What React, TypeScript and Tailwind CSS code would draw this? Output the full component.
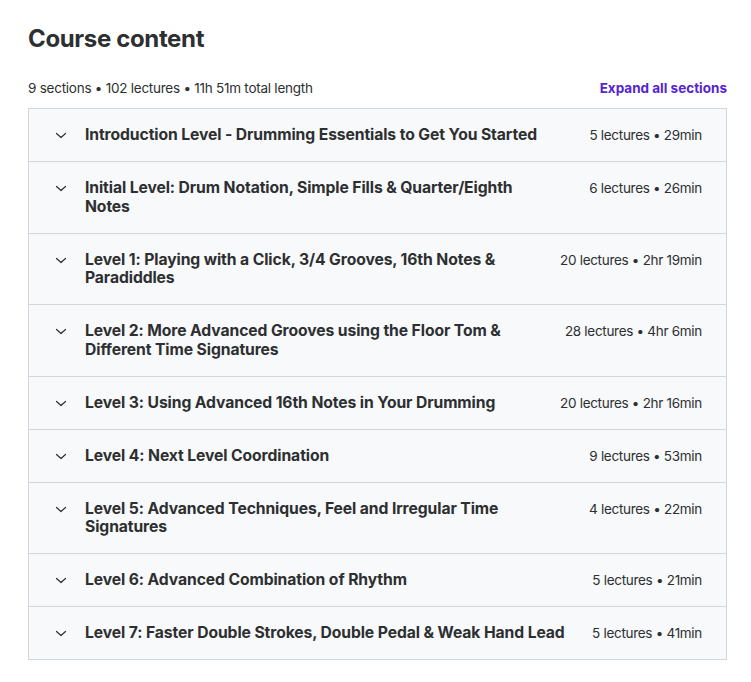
import React from 'react';

type Section = {
    title: string;
    meta: string;
};

// titles wrap where the page wraps them
const sections: Section[] = [
    { title: 'Introduction Level - Drumming Essentials to Get You Started', meta: '5 lectures • 29min' },
    { title: 'Initial Level: Drum Notation, Simple Fills & Quarter/Eighth\nNotes', meta: '6 lectures • 26min' },
    { title: 'Level 1: Playing with a Click, 3/4 Grooves, 16th Notes & Paradiddles', meta: '20 lectures • 2hr 19min' },
    { title: 'Level 2: More Advanced Grooves using the Floor Tom & Different Time Signatures', meta: '28 lectures • 4hr 6min' },
    { title: 'Level 3: Using Advanced 16th Notes in Your Drumming', meta: '20 lectures • 2hr 16min' },
    { title: 'Level 4: Next Level Coordination', meta: '9 lectures • 53min' },
    { title: 'Level 5: Advanced Techniques, Feel and Irregular Time Signatures', meta: '4 lectures • 22min' },
    { title: 'Level 6: Advanced Combination of Rhythm', meta: '5 lectures • 21min' },
    { title: 'Level 7: Faster Double Strokes, Double Pedal & Weak Hand Lead', meta: '5 lectures • 41min' },
];

const Chevron = () => (
    <svg width="16" height="16" viewBox="0 0 16 16" fill="none" className="shrink-0 mt-[1px]">
        <path d="M3.5 6.5l4.5 4 4.5-4" stroke="#2d2f31" strokeWidth="1.2" strokeLinecap="round" strokeLinejoin="round" />
    </svg>
);

const App = () => {
    return (
        <div className="w-[751px] h-[682px] bg-white text-[#2d2f31] font-['Inter',sans-serif] pl-7 pr-6 pt-[24px]">
            <h2 className="text-[24px] leading-[30px] font-bold tracking-[-0.35px]">Course content</h2>

            <div className="flex items-end justify-between mt-[24px] mb-[10px]">
                <div className="text-[13.5px] leading-[20px] tracking-[-0.25px]">9 sections • 102 lectures • 11h 51m total length</div>
                <button className="text-[13.5px] leading-[20px] font-bold text-[#5624d0]">Expand all sections</button>
            </div>

            <div className="border border-[#d1d7dc] border-b-0 w-[699px]">
                {sections.map((section) => (
                    <div
                        key={section.title}
                        className="flex items-start gap-4 bg-[#f7f9fa] border-b border-[#d1d7dc] px-6 pt-[17px] pb-[16.5px]"
                    >
                        <Chevron />
                        <div className="flex-1 text-[15.7px] leading-[18.5px] font-bold tracking-[-0.1px] whitespace-pre-line">{section.title}</div>
                        <div className="text-[13.5px] leading-[18.5px] whitespace-nowrap pl-2 tracking-[-0.3px]">{section.meta}</div>
                    </div>
                ))}
            </div>
        </div>
    );
};

export default App;
